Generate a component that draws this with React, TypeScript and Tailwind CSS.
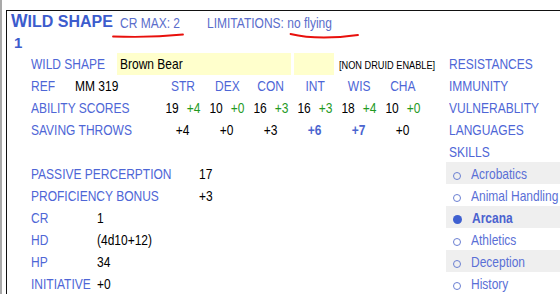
import React from 'react'

const abilities = [
    { name: 'STR', score: 19, mod: '+4', save: '+4', prof: false },
    { name: 'DEX', score: 10, mod: '+0', save: '+0', prof: false },
    { name: 'CON', score: 16, mod: '+3', save: '+3', prof: false },
    { name: 'INT', score: 16, mod: '+3', save: '+6', prof: true },
    { name: 'WIS', score: 18, mod: '+4', save: '+7', prof: true },
    { name: 'CHA', score: 10, mod: '+0', save: '+0', prof: false },
]

const skills = [
    { name: 'Acrobatics', on: false },
    { name: 'Animal Handling', on: false },
    { name: 'Arcana', on: true },
    { name: 'Athletics', on: false },
    { name: 'Deception', on: false },
    { name: 'History', on: false },
]

const traits = ['RESISTANCES', 'IMMUNITY', 'VULNERABLITY', 'LANGUAGES', 'SKILLS']

const stats = [
    { label: 'CR', value: '1' },
    { label: 'HD', value: '(4d10+12)' },
    { label: 'HP', value: '34' },
    { label: 'INITIATIVE', value: '+0' },
]

// the sheet uses a narrow face, squeeze the regular one
function T({ children, className = '', center = false }: { children: React.ReactNode, className?: string, center?: boolean }) {
    return (
        <span className={`inline-block whitespace-nowrap scale-x-[0.8] ${center ? 'origin-center' : 'origin-left'} ${className}`}>
            {children}
        </span>
    )
}

function App() {
    return (
        <div className="relative w-[560px] h-[294px] overflow-hidden bg-white flex font-['Liberation_Sans',Arial,sans-serif] text-[15px] leading-none text-black">
            <div className="w-[2px] shrink-0 bg-[#a9a9a9]" />
            <div className="ml-[4px] mt-[10px] flex-1 border-l border-t border-[#111] flex flex-col">

                {/* header */}
                <div className="h-[21px] flex items-center pl-[4px] pt-[2px]">
                    <p className="w-[109px] shrink-0 font-bold text-[#3c5ccd] text-[16px] whitespace-nowrap">
                        <span className="text-[17.5px]">W</span>ILD SHAPE
                    </p>
                    <div className="w-[87px] shrink-0"><T className="text-[#5a6dcb]">CR MAX: 2</T></div>
                    <T className="text-[#5a6dcb]">LIMITATIONS: no flying</T>
                </div>
                <div className="h-[22px] flex items-center pl-[7px] pt-[1px]">
                    <p className="font-bold text-[#3c5ccd]">1</p>
                </div>

                <div className="flex">
                    {/* left block */}
                    <div className="w-[439px] shrink-0 flex flex-col text-[#4e66d6]">
                        <div className="h-[22px] flex items-center pl-[24px] pt-[1px]">
                            <div className="w-[86px] shrink-0"><T>WILD SHAPE</T></div>
                            <div className="w-[174px] shrink-0 h-[22px] bg-[#ffffcc] flex items-center pl-[3px] text-black"><T>Brown Bear</T></div>
                            <div className="ml-[3px] w-[40px] shrink-0 h-[22px] bg-[#ffffcc]" />
                            <div className="ml-[5px]"><T className="text-[11.5px] text-black">[NON DRUID ENABLE]</T></div>
                        </div>
                        <div className="h-[22px] flex items-center pl-[24px] pt-[1px]">
                            <div className="w-[44px] shrink-0"><T>REF</T></div>
                            <div className="w-[86px] shrink-0"><T className="text-black">MM 319</T></div>
                            <div className="grid grid-cols-6 w-[264px] shrink-0">
                                {abilities.map(({ name }) => (
                                    <div key={name} className="flex justify-center"><T center>{name}</T></div>
                                ))}
                            </div>
                        </div>
                        <div className="h-[22px] flex items-center pl-[24px] pt-[1px]">
                            <div className="w-[130px] shrink-0"><T>ABILITY SCORES</T></div>
                            <div className="grid grid-cols-6 w-[264px] shrink-0">
                                {abilities.map(({ name, score, mod }) => (
                                    <div key={name} className="flex justify-center">
                                        <T center>
                                            <span className="text-black">{score}</span>
                                            <span className="ml-[10px] text-[#1f9a1f]">{mod}</span>
                                        </T>
                                    </div>
                                ))}
                            </div>
                        </div>
                        <div className="h-[22px] flex items-center pl-[24px] pt-[1px]">
                            <div className="w-[130px] shrink-0"><T>SAVING THROWS</T></div>
                            <div className="grid grid-cols-6 w-[264px] shrink-0">
                                {abilities.map(({ name, save, prof }) => (
                                    <div key={name} className="flex justify-center">
                                        <T center className={prof ? 'font-bold text-[#4a64cf]' : 'text-black'}>{save}</T>
                                    </div>
                                ))}
                            </div>
                        </div>
                        <div className="h-[22px]" />
                        <div className="h-[22px] flex items-center pl-[24px] pt-[1px]">
                            <div className="w-[168px] shrink-0"><T>PASSIVE PERCERPTION</T></div>
                            <T className="text-black">17</T>
                        </div>
                        <div className="h-[22px] flex items-center pl-[24px] pt-[1px]">
                            <div className="w-[168px] shrink-0"><T>PROFICIENCY BONUS</T></div>
                            <T className="text-black">+3</T>
                        </div>
                        {stats.map(({ label, value }) => (
                            <div key={label} className="h-[22px] flex items-center pl-[24px] pt-[1px]">
                                <div className="w-[66px] shrink-0"><T>{label}</T></div>
                                <T className="text-black">{value}</T>
                            </div>
                        ))}
                    </div>

                    {/* right column */}
                    <div className="flex-1 flex flex-col text-[#4e66d6]">
                        {traits.map((t) => (
                            <div key={t} className="h-[22px] flex items-center pl-[3px] pt-[1px]"><T>{t}</T></div>
                        ))}
                        {skills.map(({ name, on }, index) => (
                            <div
                                key={name}
                                className={`h-[22px] flex items-center pl-[7px] ${index % 2 === 0 ? 'bg-[#efefef]' : 'bg-white'}`}
                            >
                                {on
                                    ? <span className="w-[9px] h-[9px] shrink-0 mt-[5px] rounded-full bg-[#3f60d0]" />
                                    : <span className="w-[8px] h-[8px] shrink-0 mt-[5px] rounded-full border border-[#6b80d2]" />}
                                <div className="ml-[10px]">
                                    <T className={on ? 'font-bold text-[#4a62cf]' : 'text-[#5a6fd6]'}>{name}</T>
                                </div>
                            </div>
                        ))}
                    </div>
                </div>
            </div>

            {/* red pen marks */}
            <svg className="absolute left-0 top-0 pointer-events-none" width="560" height="50">
                <path d="M113 36.5 Q150 38 183 34.5" stroke="#e8100c" strokeWidth="1.8" fill="none" strokeLinecap="round" />
                <path d="M290.5 34 Q318 40.5 358 35" stroke="#e8100c" strokeWidth="1.8" fill="none" strokeLinecap="round" />
            </svg>
        </div>
    )
}

export default App
